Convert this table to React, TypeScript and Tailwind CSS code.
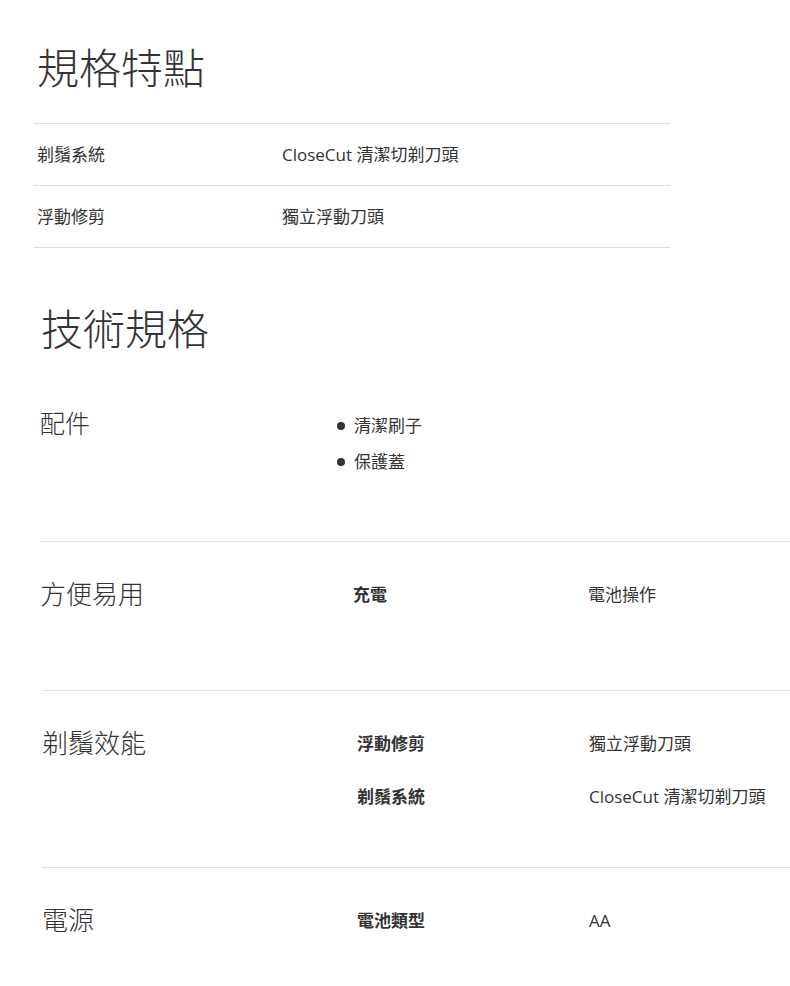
import React from "react";

type SpecItem = { key: string; value: string };
type SpecGroup = {
  title: string;
  items: SpecItem[];
  box: string;
  labelW: string;
  keyW: string;
};

const features: SpecItem[] = [
  { key: "剃鬚系統", value: "CloseCut 清潔切剃刀頭" },
  { key: "浮動修剪", value: "獨立浮動刀頭" },
];

// slight left offsets differ per row in the original page
const groups: SpecGroup[] = [
  {
    title: "方便易用",
    items: [{ key: "充電", value: "電池操作" }],
    box: "ml-[40px] h-[149px]",
    labelW: "w-[313px]",
    keyW: "w-[235px]",
  },
  {
    title: "剃鬚效能",
    items: [
      { key: "浮動修剪", value: "獨立浮動刀頭" },
      { key: "剃鬚系統", value: "CloseCut 清潔切剃刀頭" },
    ],
    box: "ml-[42px] h-[177px]",
    labelW: "w-[315px]",
    keyW: "w-[232px]",
  },
  {
    title: "電源",
    items: [{ key: "電池類型", value: "AA" }],
    box: "ml-[42px] h-[119px]",
    labelW: "w-[315px]",
    keyW: "w-[232px]",
  },
];

const font = "font-['Open_Sans','Noto_Sans_CJK_TC',sans-serif]";

export default function App() {
  return (
    <div className={`${font} w-[790px] h-[986px] overflow-hidden bg-white text-[#333]`}>
      {/* 規格特點 */}
      <section className="pl-[34px] pt-[47px] w-[670px]">
        <h2 className="pl-[3px] text-[42px] leading-[42px] font-light">規格特點</h2>
        <div className="mt-[34px] border-t border-[#e0e0e0]">
          {features.map((f) => (
            <div key={f.key} className="flex items-center h-[62px] border-b border-[#e0e0e0] text-[17px] leading-[20px]">
              <div className="w-[248px] pl-[3px]">{f.key}</div>
              <div>{f.value}</div>
            </div>
          ))}
        </div>
      </section>

      {/* 技術規格 */}
      <section className="pt-[60px]">
        <h2 className="pl-[41px] text-[42px] leading-[42px] font-light">技術規格</h2>

        <div className="flex pl-[40px] pt-[58px] h-[191px]">
          <div className="w-[297px] text-[25px] leading-[30px] font-light">配件</div>
          <ul className="text-[17px] leading-[20px]">
            {["清潔刷子", "保護蓋"].map((a) => (
              <li key={a} className="flex items-center h-[36px]">
                <span className="w-[8px] h-[8px] rounded-full bg-[#333] mr-[9px]" />
                {a}
              </li>
            ))}
          </ul>
        </div>

        {groups.map((g) => (
          <div key={g.title} className={`flex ${g.box} pt-[39px] border-t border-[#e0e0e0]`}>
            <div className={`${g.labelW} text-[26px] leading-[26px] font-light`}>{g.title}</div>
            <div className="flex flex-col gap-[33px] pt-[4px]">
              {g.items.map((it) => (
                <div key={it.key} className="flex text-[17px] leading-[20px]">
                  <div className={`${g.keyW} font-bold`}>{it.key}</div>
                  <div>{it.value}</div>
                </div>
              ))}
            </div>
          </div>
        ))}
      </section>
    </div>
  );
}
